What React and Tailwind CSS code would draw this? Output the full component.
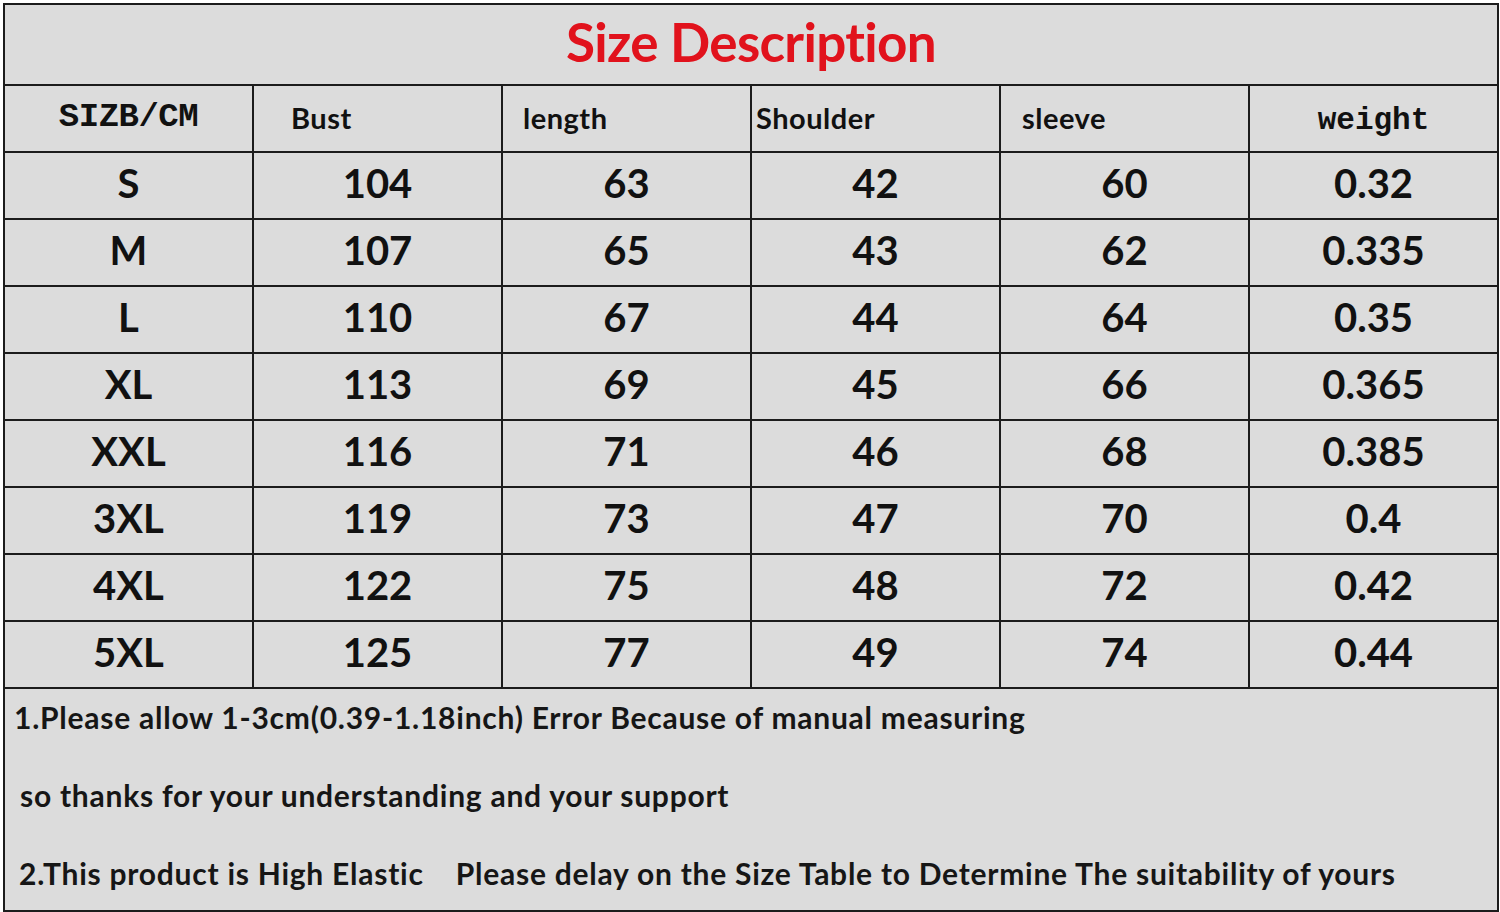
const headers = [
  { label: "SIZB/CM", cls: "justify-center font-['Liberation_Mono',monospace] text-[34px] font-bold tracking-[-0.5px]" },
  { label: "Bust", cls: "pl-[37px] text-[29px] font-bold tracking-[0.5px]" },
  { label: "length", cls: "pl-[20px] text-[29px] font-bold tracking-[0.5px]" },
  { label: "Shoulder", cls: "pl-[4px] text-[29px] font-bold tracking-[0.5px]" },
  { label: "sleeve", cls: "pl-[21px] text-[29px] font-bold tracking-[0.5px]" },
  { label: "weight", cls: "justify-center pt-[8px] font-['Liberation_Mono',monospace] text-[31px] font-bold" },
];

const rows = [
  ["S", "104", "63", "42", "60", "0.32"],
  ["M", "107", "65", "43", "62", "0.335"],
  ["L", "110", "67", "44", "64", "0.35"],
  ["XL", "113", "69", "45", "66", "0.365"],
  ["XXL", "116", "71", "46", "68", "0.385"],
  ["3XL", "119", "73", "47", "70", "0.4"],
  ["4XL", "122", "75", "48", "72", "0.42"],
  ["5XL", "125", "77", "49", "74", "0.44"],
];

export default function App() {
  return (
    <div className="min-h-screen w-full bg-white pt-[3px] pl-[3px] font-['Lato',sans-serif] text-[#111]">
      <div className="grid w-[1496px] grid-cols-6 gap-[2px] bg-[#1c1c1c] p-[2px]">
        {/* Title */}
        <div className="col-span-6 flex h-[79px] items-start justify-center bg-[#dcdcdc] pt-[6px]">
          <h1 className="text-[53px] font-bold leading-[62px] tracking-[-0.7px] text-[#e1121c]">
            Size Description
          </h1>
        </div>

        {/* Header row */}
        {headers.map((h) => (
          <div key={h.label} className={`flex h-[65px] items-center bg-[#dcdcdc] pb-[2px] ${h.cls}`}>
            {h.label}
          </div>
        ))}

        {/* Data rows */}
        {rows.map((r) =>
          r.map((v, i) => (
            <div
              key={r[0] + i}
              className="flex h-[65px] items-center justify-center bg-[#dcdcdc] pb-[6px] text-[40px] font-bold leading-none"
            >
              {v}
            </div>
          ))
        )}

        {/* Notes */}
        <div className="col-span-6 flex h-[221px] flex-col gap-[38px] bg-[#dcdcdc] pl-[9px] pt-[8px] text-[30px] font-bold leading-[40px] tracking-[0.75px] text-[#161616]">
          <p>1.Please allow 1-3cm(0.39-1.18inch) Error Because of manual measuring</p>
          <p className="ml-[6px]">so thanks for your understanding and your support</p>
          <p className="ml-[5px] whitespace-pre">
            2.This product is High Elastic{"    "}Please delay on the Size Table to Determine The suitability of yours
          </p>
        </div>
      </div>
    </div>
  );
}
